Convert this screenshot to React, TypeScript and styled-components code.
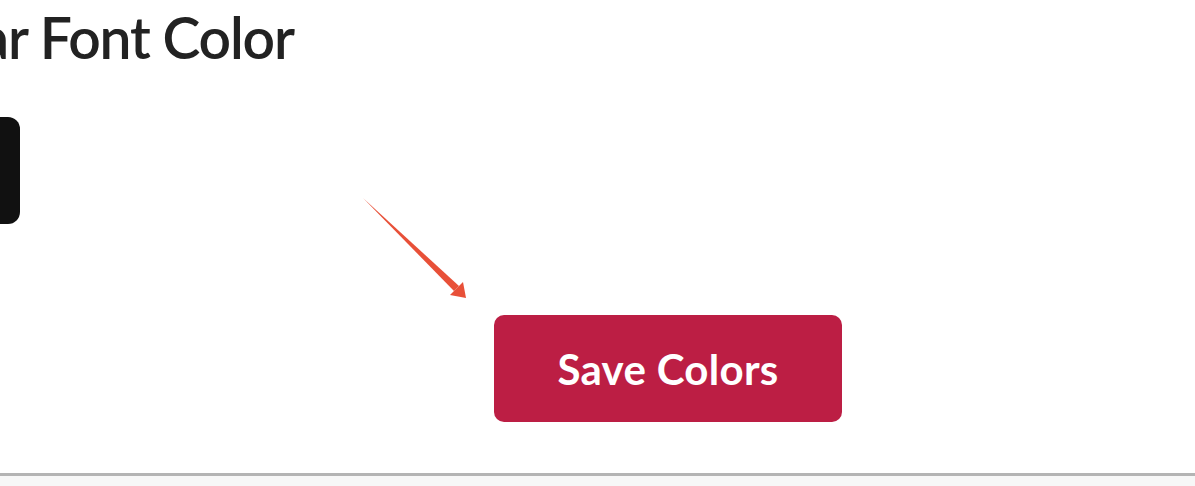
import styled, { createGlobalStyle } from 'styled-components';

const GlobalStyle = createGlobalStyle`
  html, body {
    margin: 0;
    padding: 0;
    background: #ffffff;
    font-family: Lato, "Open Sans", sans-serif;
  }
`;

const Page = styled.div`
  position: relative;
  width: 1195px;
  height: 486px;
  overflow: hidden;
  background: #ffffff;
`;

const Panel = styled.div`
  height: 476px;
  border-bottom: 3px solid #b4b4b4;
  box-sizing: border-box;
  display: flex;
  flex-direction: column;
`;

const Heading = styled.h2`
  margin: 2px 0 0 -55px;
  font-size: 57px;
  font-weight: 600;
  line-height: 70px;
  color: #222222;
  letter-spacing: -1.2px;
  white-space: nowrap;
`;

const Swatch = styled.div<{ $color: string }>`
  margin: 45px 0 0 -60px;
  width: 80px;
  height: 107px;
  border-radius: 12px;
  background: ${({ $color }) => $color};
`;

const ButtonRow = styled.div`
  margin-top: 91px;
  padding-left: 494px;
`;

const SaveButton = styled.button`
  width: 348px;
  height: 107px;
  padding: 0;
  border: none;
  border-radius: 10px;
  background: #bc1e44;
  color: #ffffff;
  font-family: Lato, sans-serif;
  font-weight: 700;
  font-size: 42px;
  letter-spacing: 0.3px;
  cursor: pointer;
`;

const Footer = styled.div`
  height: 10px;
  background: #f7f7f7;
`;

const Arrow = styled.svg`
  position: absolute;
  left: 360px;
  top: 195px;
`;

export default function App() {
  return (
    <>
      <GlobalStyle />
      <Page>
        <Panel>
          <Heading>Bar Font Color</Heading>
          <Swatch $color="#111111" />
          <ButtonRow>
            <SaveButton>Save Colors</SaveButton>
          </ButtonRow>
        </Panel>
        <Footer />
        <Arrow width="110" height="106" viewBox="0 0 110 106">
          <polygon points="3,3 99,91 94,96" fill="#e85038" />
          <polygon points="106,103 90,100 103,87" fill="#e85038" />
        </Arrow>
      </Page>
    </>
  );
}
